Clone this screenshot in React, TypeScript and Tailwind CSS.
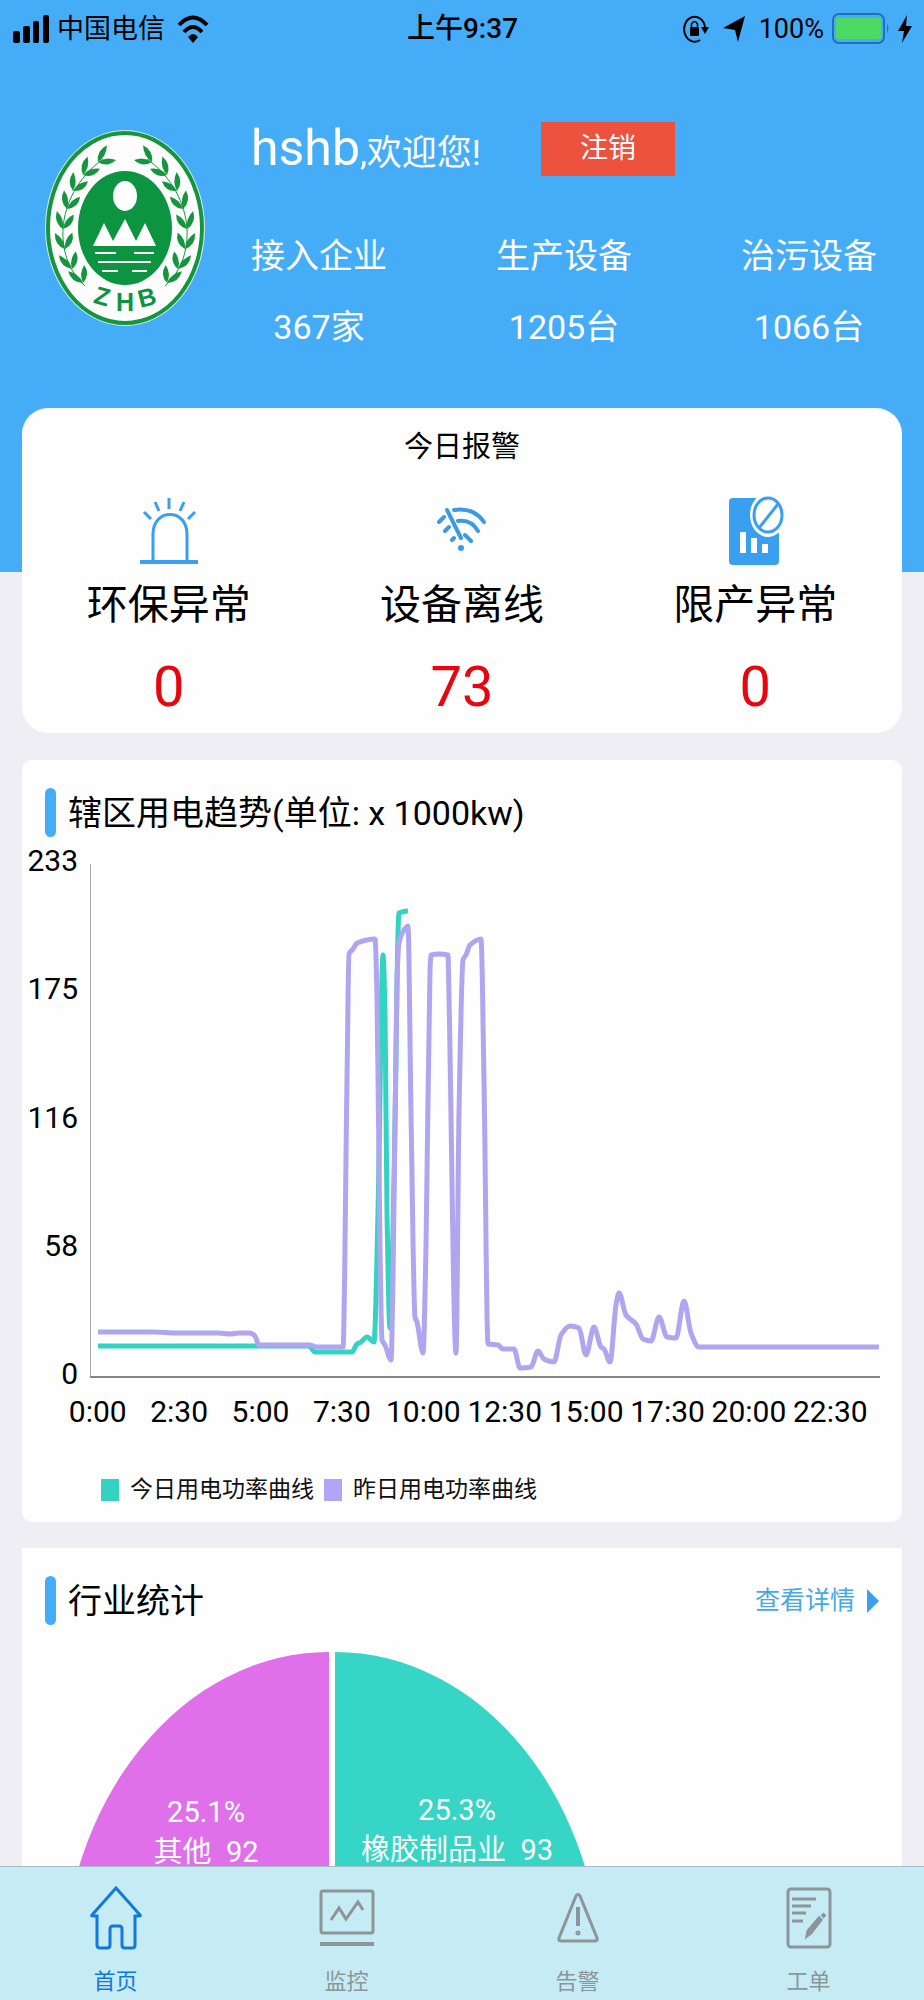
import type { ReactNode } from "react"

type Point = [number, number]

const stats = [
  { label: "接入企业", value: "367家" },
  { label: "生产设备", value: "1205台" },
  { label: "治污设备", value: "1066台" },
]

const yTicks = ["233", "175", "116", "58", "0"]
const xTicks = ["0:00", "2:30", "5:00", "7:30", "10:00", "12:30", "15:00", "17:30", "20:00", "22:30"]

// Plot points, in the 790x514 space of the chart
const today: Point[] = [
  [8, 482], [219, 482], [225, 488], [262, 488], [267, 480], [271, 478], [277, 473], [284, 478],
  [288, 349], [293, 91], [295, 149], [297, 349], [300, 464], [304, 316], [309, 49], [318, 47],
]

const yesterday: Point[] = [
  [8, 468], [63, 468], [87, 469], [128, 469], [140, 470], [149, 469], [160, 469], [165, 472],
  [169, 481], [219, 481], [228, 483], [253, 483], [257, 216], [259, 90], [263, 85], [267, 79],
  [285, 75], [287, 133], [290, 383], [292, 476], [295, 481], [301, 496], [303, 416], [307, 116],
  [309, 79], [314, 66], [318, 62], [321, 249], [325, 453], [327, 458], [333, 489], [336, 383],
  [340, 106], [341, 91], [349, 90], [358, 91], [359, 133], [366, 489], [369, 249], [373, 96],
  [376, 91], [380, 81], [391, 75], [394, 216], [398, 480], [408, 481], [413, 485], [424, 485],
  [430, 504], [441, 503], [448, 487], [454, 495], [464, 498], [471, 471], [480, 462], [489, 464],
  [496, 491], [504, 463], [511, 483], [514, 485], [520, 498], [526, 441], [529, 429], [536, 451],
  [546, 460], [553, 475], [561, 477], [569, 453], [577, 473], [586, 474], [594, 437], [601, 469],
  [609, 483], [789, 483],
]

// Monotone cubic through the points, so the line never overshoots a peak
function smoothPath(points: Point[]) {
  const slopes = points.slice(1).map(([x, y], i) => (y - points[i][1]) / (x - points[i][0]))
  const tangents = points.map((_, i) => {
    if (i === 0 || i === points.length - 1) return 0
    const a = slopes[i - 1]
    const b = slopes[i]
    return a * b <= 0 ? 0 : (2 * a * b) / (a + b)
  })
  let d = `M${points[0][0]} ${points[0][1]}`
  for (let i = 1; i < points.length; i++) {
    const [x0, y0] = points[i - 1]
    const [x1, y1] = points[i]
    const h = (x1 - x0) / 3
    d += `C${x0 + h} ${y0 + tangents[i - 1] * h} ${x1 - h} ${y1 - tangents[i] * h} ${x1} ${y1}`
  }
  return d
}

// x, y, direction of the stem at each pair of leaves
const leafNodes = [
  [38, 153, -28],
  [27, 139, -20],
  [20, 119, -8],
  [18, 99, 5],
  [22, 79, 15],
  [28, 61, 25],
  [38, 45, 38],
  [53, 32, 52],
]

function Branch() {
  return (
    <>
      <path d="M40 156C22 140 17 118 18 98C20 74 32 48 58 29" fill="none" stroke="#16953f" strokeWidth="1" />
      {leafNodes.map(([x, y, angle]) => (
        <g key={y} fill="#16953f">
          <path d="M0 0Q-7 -9 0 -19Q5 -9 0 0" transform={`translate(${x} ${y}) rotate(${angle - 24})`} />
          <path d="M0 0Q-5 -9 0 -18Q7 -9 0 0" transform={`translate(${x} ${y}) rotate(${angle + 32})`} />
        </g>
      ))}
    </>
  )
}

function Logo() {
  return (
    <svg className="mt-2 h-[196px] w-[160px] shrink-0" viewBox="0 0 160 196" role="img" aria-label="ZHB">
      <ellipse cx="80" cy="98" rx="80" ry="98" fill="#d5eee6" />
      <ellipse cx="80" cy="98" rx="77" ry="95" fill="#fdfdfd" stroke="#16953f" strokeWidth="4" />
      <ellipse cx="80" cy="98" rx="47" ry="57" fill="#0d9440" />
      <ellipse cx="80" cy="66" rx="12" ry="15" fill="#fff" />
      <path d="M48 116L59 93L68 111L80 89L91 111L100 93L111 116Z" fill="#fff" />
      <path d="M50 123H71M89 123H109M53 132H106M57 141H73M87 141H102" stroke="#fff" strokeWidth="2" />
      <Branch />
      <g transform="translate(160 0) scale(-1 1)">
        <Branch />
      </g>
      <g fill="#0d9440" fontFamily="Liberation Sans, sans-serif" fontWeight="700" fontSize="25" textAnchor="middle">
        <text x="57" y="175" transform="rotate(16 57 167)">Z</text>
        <text x="80" y="181">H</text>
        <text x="102" y="176" transform="rotate(-14 102 168)">B</text>
      </g>
    </svg>
  )
}

function StatusBar() {
  return (
    <div className="grid h-[57px] grid-cols-3 items-center pr-3 pl-[13px] text-[27px] leading-8 text-black">
      <div className="flex items-center gap-2">
        <svg className="h-7 w-9" viewBox="0 0 36 28">
          <rect x="0" y="16" width="7" height="12" rx="2" />
          <rect x="10" y="11" width="7" height="17" rx="2" />
          <rect x="20" y="6" width="6" height="22" rx="2" />
          <rect x="30" y="0" width="6" height="28" rx="2" />
        </svg>
        <span>中国电信</span>
        <svg className="ml-1 h-7 w-8" viewBox="0 0 32 28">
          <path d="M2 10Q16 -5 30 10" fill="none" stroke="#000" strokeWidth="4" />
          <path d="M7 17Q16 7 25 17" fill="none" stroke="#000" strokeWidth="4" />
          <path d="M11 22Q16 16 21 22L16 28Z" />
        </svg>
      </div>
      <div className="text-center text-[28px] font-medium">上午9:37</div>
      <div className="flex items-center justify-end">
        <svg className="mr-[14px] h-7 w-[26px]" viewBox="0 0 26 28">
          <path d="M17 25A10.500 12.500 0 1 1 22 12" fill="none" stroke="#000" strokeWidth="2" />
          <path d="M18 12H26L22 19Z" />
          <rect x="7" y="12" width="9" height="9" rx="1" />
          <path d="M8.500 13V9Q11.500 4 14.500 9V13" fill="none" stroke="#000" strokeWidth="1.500" />
        </svg>
        <svg className="mr-[14px] h-7 w-[22px]" viewBox="0 0 22 28">
          <path d="M22 1L15 27L12 15L0 13Z" />
        </svg>
        <span>100%</span>
        <svg className="mx-2 h-8 w-[58px]" viewBox="0 0 58 32">
          <rect x="1" y="1" width="51" height="29" rx="6" fill="none" stroke="#2371b4" strokeWidth="2" />
          <rect x="4" y="5" width="45" height="21" rx="2" fill="#4cd964" />
          <path d="M55 11Q58 15 55 20Z" fill="#2371b4" />
        </svg>
        <svg className="h-7 w-[14px]" viewBox="0 0 14 28">
          <path d="M9 0L0 16H6L4 28L14 11H8Z" />
        </svg>
      </div>
    </div>
  )
}

function AlarmIcon() {
  return (
    <svg className="h-[70px] w-[58px]" viewBox="0 0 58 70" fill="none" stroke="#3b9ff0" strokeWidth="3">
      <path d="M13 65V38C13 12 47 12 47 38V65" />
      <path d="M0 66H58" strokeWidth="4" />
      <path d="M29 2V13M15 6L19 15M44 6L40 15M4 16L11 23M55 16L48 23" />
    </svg>
  )
}

function OfflineIcon() {
  return (
    <svg
      className="h-[70px] w-[50px]"
      viewBox="0 -11 50 70"
      fill="none"
      stroke="#3b9be0"
      strokeWidth="4"
      strokeLinecap="round"
    >
      <path d="M10 3L24 31" />
      <path d="M17 3Q37 0 47 15M21 14Q34 12 41 24M28 28L34 34" />
      <path d="M7 10L2 15M12 20L8 24M17 31L15 33" />
      <circle cx="24" cy="41" r="3" fill="#3b9be0" stroke="none" />
    </svg>
  )
}

function LimitIcon() {
  return (
    <svg className="h-[70px] w-[57px]" viewBox="-2 0 57 70">
      <rect x="0" y="2" width="50" height="67" rx="4" fill="#3b9ff0" />
      <path d="M11 36H17V57H11ZM22 42H28V57H22ZM33 48H39V57H33Z" fill="#fff" />
      <ellipse cx="39" cy="19" rx="18" ry="22" fill="#fefefe" />
      <ellipse cx="39" cy="19" rx="14" ry="17" fill="none" stroke="#3b9ff0" strokeWidth="3" />
      <path d="M30 32L49 8" stroke="#3b9ff0" strokeWidth="3" />
    </svg>
  )
}

const alarms = [
  { label: "环保异常", count: 0, icon: <AlarmIcon /> },
  { label: "设备离线", count: 73, icon: <OfflineIcon /> },
  { label: "限产异常", count: 0, icon: <LimitIcon /> },
]

function SectionTitle({ title, children }: { title: string; children?: ReactNode }) {
  return (
    <div className="flex h-[49px] items-center pr-[23px] pl-[23px]">
      <span className="h-full w-[11px] rounded-full bg-[#45adf7]" />
      <h2 className="ml-3 flex-1 text-[34px] leading-[48px] text-black">{title}</h2>
      {children}
    </div>
  )
}

function TrendChart() {
  return (
    <>
      <div className="mt-[9px] flex items-start gap-3 pr-[22px] text-[30px] leading-[30px] text-black">
        <div className="flex h-[543px] w-14 shrink-0 flex-col justify-between text-right">
          {yTicks.map((tick) => (
            <span key={tick}>{tick}</span>
          ))}
        </div>
        <svg className="mt-[18px] h-[514px] min-w-0 flex-1" viewBox="0 0 790 514" preserveAspectRatio="none" fill="none">
          <path d="M0.500 0V514" stroke="#a9a9a9" />
          <path d="M0 513H790" stroke="#868686" strokeWidth="2" />
          <path d={smoothPath(today)} stroke="#34d3c1" strokeWidth="5" strokeLinejoin="round" />
          <path d={smoothPath(yesterday)} stroke="#b0a6f0" strokeWidth="5" strokeLinejoin="round" />
        </svg>
      </div>
      <div className="mt-2 flex pr-[31px] pl-[35px] text-[30px] leading-[30px] text-black">
        {xTicks.map((tick) => (
          <span key={tick} className="flex-1 text-center">{tick}</span>
        ))}
      </div>
      <div className="mt-12 flex h-[30px] items-center gap-[10px] pl-[79px] text-[23px] leading-[30px] text-[#111]">
        <div className="flex items-center gap-[11px]">
          <span className="h-[22px] w-[18px] bg-[#34d3c1]" />
          今日用电功率曲线
        </div>
        <div className="flex items-center gap-[11px]">
          <span className="h-[22px] w-[18px] bg-[#b0a6f5]" />
          昨日用电功率曲线
        </div>
      </div>
    </>
  )
}

function IndustryPie() {
  return (
    <svg className="mt-[27px] ml-10 h-[340px] w-[540px]" viewBox="0 0 540 340">
      <path d="M267 331V0A267 331 0 0 0 0 331Z" fill="#e06fea" />
      <path d="M273 331V0A267 331 0 0 1 540 331Z" fill="#36d5c5" />
      <g fill="#fff" fontSize="29" textAnchor="middle">
        <text x="144" y="170">25.1%</text>
        <text x="144" y="210" className="whitespace-pre">{"其他  92"}</text>
        <text x="395" y="168">25.3%</text>
        <text x="395" y="208" className="whitespace-pre">{"橡胶制品业  93"}</text>
      </g>
    </svg>
  )
}

const tabs = [
  {
    label: "首页",
    active: true,
    icon: (
      <path d="M27 2L3 29Q2 30 4 30H8V59Q8 62 11 62H18Q21 62 21 59V43Q21 40 24 40H30Q33 40 33 43V59Q33 62 36 62H43Q46 62 46 59V30H50Q52 30 51 29Z" />
    ),
  },
  {
    label: "监控",
    icon: (
      <>
        <rect x="1" y="5" width="52" height="42" rx="2" />
        <path d="M11 34L19 22L26 33L38 16L43 24" />
        <path d="M0 58H54" strokeWidth="4" />
      </>
    ),
  },
  {
    label: "告警",
    icon: (
      <>
        <path d="M25 10Q27 7 29 10L46 52Q47 55 44 55H10Q7 55 8 52Z" />
        <path d="M27 21V40" strokeWidth="4" />
        <circle cx="27" cy="47" r="1" />
      </>
    ),
  },
  {
    label: "工单",
    icon: (
      <>
        <rect x="6" y="3" width="42" height="58" rx="3" />
        <path d="M10 13H34M10 20H29M10 27H24M10 35H21" />
        <path d="M25 50L26 45L37 32L39 34L29 47Z" fill="currentColor" />
        <path d="M40 28L43 31" strokeWidth="4" />
      </>
    ),
  },
]

function TabBar() {
  return (
    <nav className="grid h-[134px] shrink-0 grid-cols-4 border-t border-[#a9bcc6] bg-[#c5ebf5]">
      {tabs.map((tab) => (
        <a
          key={tab.label}
          href="#"
          className={`flex flex-col items-center pt-[19px] text-[22px] leading-7 ${tab.active ? "text-[#1079dc]" : "text-[#8d9599]"}`}
        >
          <svg className="h-16 w-[54px] overflow-visible" viewBox="0 0 54 64" fill="none" stroke="currentColor" strokeWidth="3">
            {tab.icon}
          </svg>
          <span className="mt-[18px]">{tab.label}</span>
        </a>
      ))}
    </nav>
  )
}

export default function App() {
  return (
    <div className="flex h-dvh w-full flex-col bg-[#eeeef4] font-[Roboto,'Noto_Sans_CJK_SC',sans-serif]">
      <main className="min-h-0 flex-1 overflow-y-auto [scrollbar-width:none]">
        {/* Header */}
        <header className="h-[572px] bg-[#45adf7]">
          <StatusBar />
          <div className="flex pt-[65px] pr-[47px] pl-[45px] text-white">
            <Logo />
            <div className="ml-[46px] flex-1">
              <div className="flex h-[54px] items-center gap-[60px]">
                <p className="pt-1 text-[35px] leading-[54px]">
                  <span className="text-[50px]">hshb</span>,欢迎您!
                </p>
                <button type="button" className="h-[54px] w-[134px] bg-[#ec523d] text-[28px] leading-8">
                  注销
                </button>
              </div>
              <div className="mt-14 flex justify-between text-center text-[34px] leading-[48px]">
                {stats.map((stat) => (
                  <div key={stat.label}>
                    <p>{stat.label}</p>
                    <p className="mt-[23px]">{stat.value}</p>
                  </div>
                ))}
              </div>
            </div>
          </div>
        </header>

        {/* Today's alarms, lies half over the header */}
        <section className="mx-[22px] -mt-[164px] rounded-[26px] bg-[#fefefe] pt-[19px] pb-[14px] text-center">
          <h2 className="text-[29px] leading-10 text-black">今日报警</h2>
          <div className="mt-[29px] grid grid-cols-3">
            {alarms.map((alarm) => (
              <div key={alarm.label} className="flex flex-col items-center">
                {alarm.icon}
                <p className="mt-[11px] text-[41px] leading-[56px] text-black">{alarm.label}</p>
                <p className="mt-[22px] text-[56px] leading-[64px] text-[#e8050e]">{alarm.count}</p>
              </div>
            ))}
          </div>
        </section>

        {/* Power trend */}
        <section className="mx-[22px] mt-[27px] rounded-[10px] bg-[#fefefe] pt-7 pb-[17px]">
          <SectionTitle title="辖区用电趋势(单位: x 1000kw)" />
          <TrendChart />
        </section>

        {/* Industry statistics */}
        <section className="mx-[22px] mt-[26px] bg-[#fefefe] pt-7">
          <SectionTitle title="行业统计">
            <a href="#" className="flex items-center gap-3 text-[25px] leading-8 text-[#45a9e6]">
              查看详情
              <svg className="h-6 w-3" viewBox="0 0 12 24">
                <path d="M0 0L12 12L0 24Z" fill="#3b9ff0" />
              </svg>
            </a>
          </SectionTitle>
          <IndustryPie />
        </section>
      </main>
      <TabBar />
    </div>
  )
}
